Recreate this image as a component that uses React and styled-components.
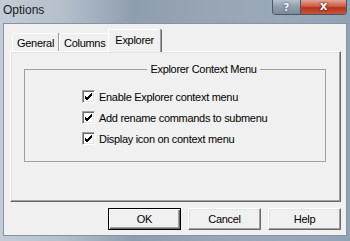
import React, {useState} from 'react';
import styled, {createGlobalStyle} from 'styled-components';

// Réglages globaux de la page.
const GlobalStyle = createGlobalStyle`
  html, body {
    margin: 0;
    padding: 0;
    width: 350px;
    height: 241px;
    overflow: hidden;
  }
`;

const TABS = ['General', 'Columns', 'Explorer'];

const OPTIONS = [
  'Enable Explorer context menu',
  'Add rename commands to submenu',
  'Display icon on context menu',
];

const CheckMark = () => (
  <svg width="9" height="9" viewBox="0 0 9 9">
    <path
      d="M1 4 L3 6 L8 1 M1 5 L3 7 L8 2 M1 6 L3 8 L8 3"
      stroke="#000"
      strokeWidth="1"
      fill="none"
      shapeRendering="crispEdges"
    />
  </svg>
);

const App = () => {
  const [active, setActive] = useState('Explorer');
  const [checked, setChecked] = useState([true, true, true]);

  const toggle = i => {
    setChecked(prev => prev.map((v, j) => (j === i ? !v : v)));
  };

  return (
    <Window>
      <GlobalStyle />
      <TitleBar>
        <Title>Options</Title>
        <CaptionButtons>
          <HelpButton>?</HelpButton>
          <CloseButton>x</CloseButton>
        </CaptionButtons>
      </TitleBar>
      <Client>
        <TabArea>
          <TabRow>
            {TABS.map(t => (
              <Tab key={t} $active={t === active} onClick={() => setActive(t)}>
                {t}
              </Tab>
            ))}
          </TabRow>
          <Panel>
            <Group>
              <Legend>Explorer Context Menu</Legend>
              {OPTIONS.map((label, i) => (
                <CheckRow key={label} onClick={() => toggle(i)}>
                  <Box>{checked[i] && <CheckMark />}</Box>
                  <CheckLabel>{label}</CheckLabel>
                </CheckRow>
              ))}
            </Group>
          </Panel>
        </TabArea>
        <ButtonRow>
          <DialogButton $default>OK</DialogButton>
          <DialogButton>Cancel</DialogButton>
          <DialogButton>Help</DialogButton>
        </ButtonRow>
      </Client>
    </Window>
  );
};

// Styled components
const Window = styled.div`
  width: 350px;
  height: 241px;
  box-sizing: border-box;
  display: flex;
  flex-direction: column;
  background:
    linear-gradient(
      90deg,
      #c3ccd6 0%,
      #b4bfcb 18%,
      #8f9eae 38%,
      #97a5b4 60%,
      #9aa9b9 80%,
      #8fa2b6 100%
    );
  font-family: 'Liberation Sans', Arial, sans-serif;
`;

const TitleBar = styled.div`
  height: 23px;
  display: flex;
  align-items: flex-start;
  justify-content: space-between;
  padding: 0 3px;
`;

const Title = styled.span`
  font-size: 12px;
  line-height: 12px;
  margin-top: 4px;
  color: #1a1a1a;
`;

const CaptionButtons = styled.div`
  display: flex;
  height: 15px;
  border: 1px solid #4a5866;
  border-top: none;
  border-radius: 0 0 4px 4px;
  overflow: hidden;
  box-sizing: border-box;
`;

const HelpButton = styled.div`
  width: 27px;
  display: flex;
  align-items: center;
  justify-content: center;
  background: linear-gradient(#b6c0cb, #8e9cab 50%, #7c8b9b);
  border-right: 1px solid #4a5866;
  color: #fff;
  font: bold 10px 'DejaVu Sans', sans-serif;
  text-shadow: 0 0 2px #2a3440;
`;

const CloseButton = styled.div`
  width: 45px;
  display: flex;
  align-items: center;
  justify-content: center;
  background: linear-gradient(#e3a596, #cf5a44 45%, #b8321c 55%, #c8553a);
  color: #fff;
  font: bold 12px 'DejaVu Sans', sans-serif;
  line-height: 12px;
  padding-bottom: 2px;
  text-shadow: 0 0 2px #3a0d05, 0 0 1px #3a0d05;
`;

const Client = styled.div`
  flex: 1;
  margin: 0 3px 5px 3px;
  background: #f0f0f0;
  border: 1px solid #8593a2;
  box-sizing: border-box;
  display: flex;
  flex-direction: column;
  padding: 5px 5px 0 6px;
`;

const TabArea = styled.div`
  display: flex;
  flex-direction: column;
`;

const TabRow = styled.div`
  display: flex;
  align-items: flex-end;
  height: 22px;
  padding-left: 2px;
  position: relative;
  z-index: 1;
`;

const Tab = styled.div`
  height: ${p => (p.$active ? '23px' : '18px')};
  margin: ${p => (p.$active ? '0 -2px -1px -2px' : '0')};
  padding: 0 ${p => (p.$active ? '6px' : '4px')};
  box-sizing: border-box;
  display: flex;
  align-items: center;
  padding-top: ${p => (p.$active ? '0' : '1px')};
  padding-bottom: ${p => (p.$active ? '3px' : '0')};
  background: #f0f0f0;
  border-top: 1px solid #fff;
  border-left: 1px solid #fff;
  border-right: 1px solid #a0a0a0;
  box-shadow: 1px 0 0 #696969;
  border-radius: 2px 2px 0 0;
  font-size: 11px;
  letter-spacing: -0.3px;
  color: #000;
  cursor: default;
`;

const Panel = styled.div`
  height: 151px;
  box-sizing: border-box;
  border-top: 1px solid #fff;
  border-left: 1px solid #fff;
  border-right: 1px solid #696969;
  border-bottom: 1px solid #696969;
  box-shadow: inset -1px -1px 0 #a0a0a0, inset 1px 1px 0 #e3e3e3;
  padding: 11px 14px 0 13px;
`;

const Group = styled.fieldset`
  margin: 0;
  height: 99px;
  box-sizing: border-box;
  border: 1px solid #a0a0a0;
  padding: 10px 0 0 57px;
  display: flex;
  flex-direction: column;
`;

const Legend = styled.legend`
  margin: 0 auto;
  padding: 0 3px;
  font-size: 11px;
  line-height: 13px;
  letter-spacing: -0.3px;
  color: #000;
`;

const CheckRow = styled.div`
  height: 21px;
  display: flex;
  align-items: center;
  gap: 4px;
  cursor: default;
`;

const Box = styled.span`
  width: 13px;
  height: 13px;
  box-sizing: border-box;
  background: #fff;
  border-top: 1px solid #a0a0a0;
  border-left: 1px solid #a0a0a0;
  border-right: 1px solid #fff;
  border-bottom: 1px solid #fff;
  box-shadow: inset 1px 1px 0 #696969, inset -1px -1px 0 #e3e3e3;
  display: flex;
  align-items: center;
  justify-content: center;
`;

const CheckLabel = styled.span`
  font-size: 11px;
  letter-spacing: -0.3px;
  color: #000;
`;

const ButtonRow = styled.div`
  display: flex;
  justify-content: flex-end;
  gap: 7px;
  margin-top: 6px;
`;

const DialogButton = styled.button`
  width: 73px;
  height: 22px;
  box-sizing: border-box;
  background: #f0f0f0;
  border: 1px solid;
  border-color: ${p => (p.$default ? '#000' : '#fff #696969 #696969 #fff')};
  box-shadow: ${p =>
    p.$default
      ? 'inset 1px 1px 0 #fff, inset -1px -1px 0 #696969, inset -2px -2px 0 #a0a0a0'
      : 'inset -1px -1px 0 #a0a0a0, inset 1px 1px 0 #e3e3e3'};
  font-family: 'Liberation Sans', Arial, sans-serif;
  font-size: 11px;
  letter-spacing: -0.3px;
  color: #000;
  padding: 0;
  border-radius: 0;
`;

export default App;
